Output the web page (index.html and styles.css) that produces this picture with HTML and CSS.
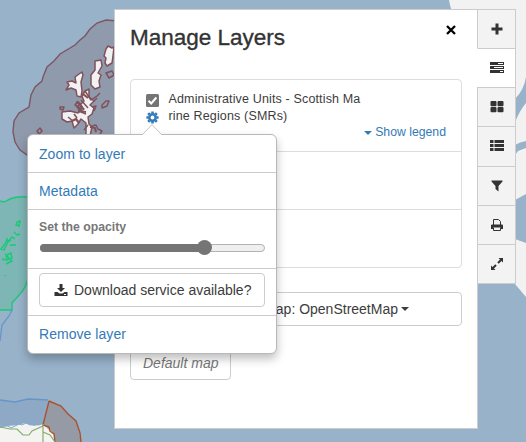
FILE: index.html
```
<!DOCTYPE html>
<html lang="en">
<head>
<meta charset="utf-8">
<title>Manage Layers</title>
<link rel="stylesheet" href="styles.css">
</head>
<body>
<div class="app">
  <svg class="map" width="526" height="442" viewBox="0 0 526 442" fill="none">
    <rect width="526" height="442" fill="#97b2c9"/>
    <!-- Shetland region -->
    <path d="M118 21 106 20 97 23 90 29 85 36 80 40 75 45 60 54 54 61 47 67 43 77 42 81 35 87 31 95 29 107 19 113 14 121 13 132 15 142 20 150 30 157H118Z" fill="#8f9aad" stroke="#7d5661" stroke-width="1.4"/>
    <g fill="#f2f2f2" stroke="#80525c" stroke-width="1.5" stroke-linejoin="round">
      <path d="M106 49 108 46 112 48 114 47 113 56 112 63 107 66 105 63 106 58 104 56Z"/>
      <path d="M95 61 101 60 102 66 98 73 101 75 99 81 100 87 95 89 91 85 91 75 95 70Z"/>
      <path d="M79 74 82 72 83 75 81 82 82 91 81 97 77 96 76 90 71 88 66 90 69 85 67 82 72 81 76 83 75 77Z"/>
      <path d="M85 91 89 89 89 97 94 101 90 105 94 108 92 114 88 117 89 124 92 127 90 136H86L86 123 81 119 78 124 74 128 72 121 67 122 62 119V112L70 111 78 113 84 109 80 105 84 101 82 96Z"/>
      <path fill="none" d="M76 102 80 104 77 107 81 112 86 114 M78 101 75 105 80 108 M85 91 91 100 97 96 100 93 M94 101 97 98 M92 107 96 106 94 111 M88 125 84 130 M92 126 96 125 98 129 102 131 100 134 M60 107 64 107 63 110 60 109Z M106 73 112 71 114 75 109 78Z M102 105 106 101 109 101 107 106 102 108Z M37 131 40 128 42 131 39 134Z M68 117 73 121 M74 114 77 118 M81 100 88 108"/>
      <path fill="none" stroke-width="2.2" d="M78 102 82 107 79 111 86 112 M72 121 76 119 79 123 M90 127 95 128 96 132 M83 94 88 98"/>
    </g>
    <!-- West region -->
    <path d="M0 201Q4 203 8 200 16 196 28 197V279Q23 291 12 303V310H0Z" fill="#7db6b5"/>
    <path d="M0 201Q4 203 8 200 16 196 28 197M28 279Q25 289 20 294L12 303V310H0" stroke="#18ca75" stroke-width="1.4"/>
    <path d="m17 222 3-1-1 5-3-1Zm-3 10 3 3 3-1m-5 5-3-2-4 5-1-3-2 5-4 5 3 1 4-8 3-2m-4 15 4-2 1 5-5 2-1-5 6 6-6 3m-4-5 4 1m4-15h6m-11 30v1" stroke="#18ca75" stroke-width="1.4"/>
    <!-- South coast -->
    <path d="M0 400 16 402 30 399 48 401 43 425H0Z" fill="#8da9c5"/>
    <path d="M0 400 15 402 28 399 48 400M12 310 9 316 2 325 0 341" stroke="#6795ca" stroke-width="1.3"/>
    <path d="M0 428 9 426 18 425 25 423 34 426 43 424 48 429 53 432 56 442H0Z" fill="#f3f3f2"/>
    <path d="m0 427 5-2 3 1 3 2 4-2 4-2 3 1 4-2 4 2 5-1 4 1 4-2" stroke="#7ea9cf"/>
    <path d="M49 401 61 406 76 421 81 442H55L54 434 49 427 43 425Z" fill="#969aa5"/>
    <path d="M49 401 61 406 68 414 76 421 80 433 81 442M49 401 43 425 49 427 50 431 54 434 55 442" stroke="#a9532e" stroke-width="1.4"/>
    <path d="m0 427 10 2 7 0 6 6 6 0 3-4 11-5M43 424v18m0-10 7 3 5 7" stroke="#86ad6b" stroke-width="1.2"/>
    <!-- Eastern mainland -->
    <path d="M449 0Q450 8 455 18H510V284H515L526 297V243L515 239V200L526 194V0Z" fill="#f2f2f2"/>
    <path d="M515 99Q524 90 526 77V103Q520 110 515 122ZM515 145Q520 142 526 141V148L518 151 515 155Z" fill="#97b2c9"/>
  </svg>

  <main class="panel">
    <header class="panel-head">
      <h1>Manage Layers</h1>
      <svg class="close" width="10" height="10" viewBox="0 0 10 10"><path d="m1 1 8 8M9 1 1 9" stroke="#000" stroke-width="2.3"/></svg>
    </header>
    <div class="layers">
      <div class="layer">
        <div class="controls">
          <svg width="13" height="13" viewBox="0 0 13 13"><rect width="13" height="13" rx="1.5" fill="#757575"/><path d="m2.500 6.800 2.700 2.700 5.200-6" fill="none" stroke="#fff" stroke-width="2"/></svg>
          <svg width="13" height="13" viewBox="-6.5 -6.5 13 13"><g stroke="#337ab7" fill="none"><circle r="3.2" stroke-width="2.5"/><path d="M0-6.1V-4M0 4V6.1M-6.1 0H-4M4 0H6.1M-4.3-4.3-3-3M3 3 4.3 4.3M-4.3 4.3-3 3M3-3 4.3-4.3" stroke-width="2.6"/></g></svg>
        </div>
        <div class="info">
          <div class="name">Administrative Units - Scottish Ma<br>rine Regions (SMRs)</div>
          <a class="legend"><i class="caret"></i>Show legend</a>
        </div>
      </div>
      <div class="layer"></div>
      <div class="layer"></div>
    </div>
    <button class="btn basemap">Change basemap: OpenStreetMap<i class="caret"></i></button>
    <button class="btn default">Default map</button>
  </main>

  <nav class="tabs">
    <div class="tab"><svg width="14" height="14" viewBox="0 0 14 14"><path d="M7 1.500v11M1.500 7h11" stroke="#333" stroke-width="3"/></svg></div>
    <div class="tab active"><svg width="14" height="14" viewBox="0 0 14 14"><path d="M0 1h14v3H0zM0 5h14v3H0zM0 9h14v3H0z" fill="#333"/><path d="M8 2.500h5M4 6.500h9M10 10.500h3" stroke="#fff"/></svg></div>
    <div class="tab"><svg width="14" height="14" viewBox="0 0 14 14" fill="#333"><rect x=".5" y="1" width="6" height="5.200" rx="1"/><rect x="7.500" y="1" width="6" height="5.200" rx="1"/><rect x=".5" y="7" width="6" height="5.200" rx="1"/><rect x="7.500" y="7" width="6" height="5.200" rx="1"/></svg></div>
    <div class="tab"><svg width="14" height="14" viewBox="0 0 14 14" fill="#333"><path d="M0 1h3.500v3H0zM4.500 1H14v3H4.500zM0 5h3.500v3H0zM4.500 5H14v3H4.500zM0 9h3.500v3H0zM4.500 9H14v3H4.500z"/></svg></div>
    <div class="tab"><svg width="14" height="14" viewBox="0 0 14 14" fill="#333"><path d="M1.500 1.500h11v1L8.500 7v5.500L5.500 10V7l-4-4.500Z"/></svg></div>
    <div class="tab"><svg width="14" height="14" viewBox="0 0 14 14"><path d="M3.500 7V1.500h5L10.500 3.500V7M3.500 9.500v3h7v-3" fill="none" stroke="#333"/><path d="M1 7.500Q1 6.500 2 6.500h10q1 0 1 1V11h-2V9.500H3V11H1Z" fill="#333"/></svg></div>
    <div class="tab"><svg width="14" height="14" viewBox="0 0 14 14"><path d="M8.500 1H13v4.500ZM1 8.500 5.500 13H1Z" fill="#333"/><path d="M11.500 2.500 8 6M6 8l-3.500 3.500" stroke="#333" stroke-width="2"/></svg></div>
  </nav>

  <div class="popover">
    <svg class="arrow" width="20" height="11" viewBox="0 0 20 11"><path d="M0 11 10 .7 20 11" fill="#fff" stroke="#c3c3c3"/></svg>
    <a class="row">Zoom to layer</a>
    <a class="row">Metadata</a>
    <div class="opacity">
      <label>Set the opacity</label>
      <div class="track"><div class="fill"></div></div>
    </div>
    <div class="download">
      <button class="btn"><svg width="14" height="12" viewBox="0 0 14 12"><path d="M5.500 0h3v4H11L7 8 3 4h2.500ZM.5 8h3l2 1.500h3l2-1.500h3v4H.5Z" fill="#333"/><path d="M10 10.500h2" stroke="#fff"/></svg>Download service available?</button>
    </div>
    <a class="row">Remove layer</a>
  </div>
</div>
</body>
</html>
```
FILE: styles.css
```
* { box-sizing: border-box; }
body { margin: 0; font: 14px/20px "Liberation Sans", Arial, sans-serif; color: #3c3c3c; }
.app { position: relative; width: 526px; height: 442px; overflow: hidden; }
svg { display: block; flex: none; }
.map { position: absolute; inset: 0; }
a { color: #337ab7; }

.panel { position: absolute; left: 114px; top: 9px; width: 364px; height: 420px; padding: 0 16px 0 15px; background: #fff; border: 1px solid #ccc; }
.panel-head { display: flex; justify-content: space-between; height: 69px; padding-top: 15px; }
h1 { margin: 0; font-size: 22.500px; line-height: 26px; font-weight: 400; color: #333; -webkit-text-stroke: .35px #333; }
.close { margin: 0 5px 0 0; }
.layers { width: 332px; height: 189px; border: 1px solid #ddd; border-radius: 4px; }
.layer { height: 58px; border-top: 1px solid #ddd; }
.layer:first-child { display: flex; height: 71px; border-top: 0; padding: 11px 15px 0; }
.controls { display: flex; flex-direction: column; gap: 4px; width: 22.500px; padding-top: 3px; }
.info { flex: 1; display: flex; flex-direction: column; }
.name { font-size: 12.500px; line-height: 17px; letter-spacing: .15px; white-space: nowrap; }
.legend { align-self: flex-end; display: flex; align-items: center; gap: 3px; margin-top: -1px; font-size: 12.250px; line-height: 17px; }
.caret { width: 0; border: 4px solid transparent; border-top-color: currentColor; border-bottom: 0; }

.btn { display: flex; align-items: center; height: 34px; padding: 0 13px; border: 1px solid #ccc; border-radius: 4px; background: #fff; color: #3c3c3c; font: inherit; white-space: nowrap; }
.basemap { width: 332px; margin-top: 24px; padding: 0 52px 0 0; justify-content: flex-end; gap: 3px; }
.default { margin-top: 20px; width: 101px; padding: 0 12px; font-style: italic; color: #777; }

.tabs { position: absolute; left: 477px; top: 9px; width: 39px; height: 275px; display: flex; flex-direction: column; border-bottom: 1px solid #ccc; }
.tab { flex: 1; display: flex; align-items: center; justify-content: center; background: #f3f3f3; border: 1px solid #ccc; border-bottom: 0; }
.tab.active { background: #fff; border-left-color: #fff; }

.popover { position: absolute; left: 27px; top: 134px; width: 250px; height: 220px; border: 1px solid #b8b8b8; border-radius: 6px; background: #fff; box-shadow: 0 5px 10px rgba(0,0,0,.25); }
.arrow { position: absolute; left: 114px; top: -11px; }
.row { display: block; height: 37px; padding: 9px 11px 0; letter-spacing: .05px; }
.row:nth-of-type(2) { border-top: 1px solid #ccc; padding-top: 8px; }
.row:last-child { padding-top: 8px; }
.opacity { height: 60px; padding: 9px 11px 0; border-top: 1px solid #ccc; border-bottom: 1px solid #ccc; }
label { display: block; font-size: 12.250px; line-height: 17px; font-weight: 700; color: #777; }
.track { width: 225px; height: 8px; margin: 8px 0 0 1px; border: 1px solid #b2b2b2; border-radius: 4px; background: #efefef; }
.fill { position: relative; width: 164px; height: 8px; margin: -1px; border-radius: 4px; background: #757575; }
.fill::after { content: ""; position: absolute; right: -8px; top: -4px; width: 15px; height: 15px; border-radius: 50%; background: #757575; }
.download { height: 47px; padding: 4px 11px; border-bottom: 1px solid #ccc; }
.download .btn { width: 226px; gap: 6px; padding: 0 14px; }
```
